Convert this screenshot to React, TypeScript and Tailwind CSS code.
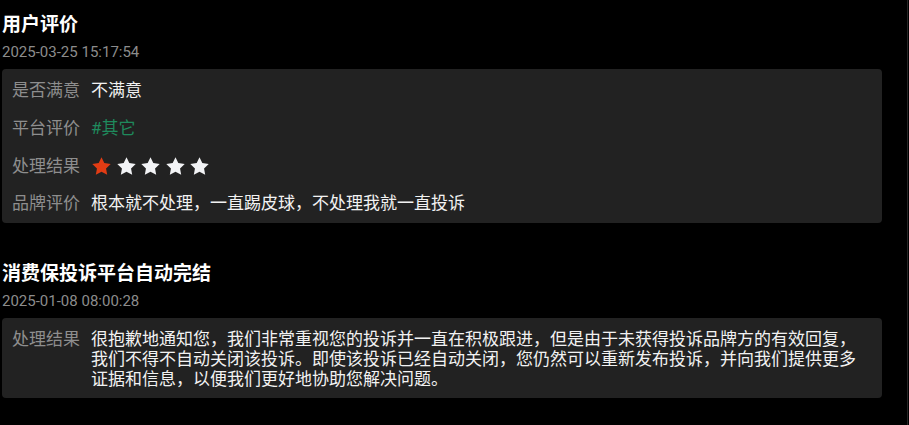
import React from 'react';

const FONT = 'Roboto, "Noto Sans CJK SC", sans-serif';

function Star({ color }: { color: string }) {
  return (
    <svg viewBox="0 0 24 24" className="h-[21px] w-[21px] shrink-0">
      <polygon
        points="12,1.5 15.2,8.1 22.5,9.1 17.2,14.2 18.5,21.5 12,18 5.5,21.5 6.8,14.2 1.5,9.1 8.8,8.1"
        fill={color}
      />
    </svg>
  );
}

function Row({ label, children }: { label: string; children: React.ReactNode }) {
  return (
    <div className="flex items-center gap-[11px] h-6">
      <span className="w-[68px] shrink-0 text-[#8e8e8e]">{label}</span>
      <div className="flex items-center">{children}</div>
    </div>
  );
}

export default function App() {
  const closeText = [
    '很抱歉地通知您，我们非常重视您的投诉并一直在积极跟进，但是由于未获得投诉品牌方的有效回复，',
    '我们不得不自动关闭该投诉。即使该投诉已经自动关闭，您仍然可以重新发布投诉，并向我们提供更多',
    '证据和信息，以便我们更好地协助您解决问题。',
  ];

  return (
    <div className="flex min-h-[425px] w-[909px] bg-black" style={{ fontFamily: FONT }}>
      <div className="flex-1 px-[2px] pt-[12px]">
        {/* 用户评价 */}
        <div className="text-[19px] leading-[26px] font-bold text-white">用户评价</div>
        <div className="mt-[3px] text-[15px] leading-[22px] text-[#8c8c8c]">2025-03-25 15:17:54</div>
        <div className="mt-[6px] w-[880px] rounded-[4px] bg-[#222222] pl-[10px] pt-[10px] pb-[7px] text-[17px] flex flex-col gap-[13.67px]">
          <Row label="是否满意">
            <span className="text-[#f2f2f2]">不满意</span>
          </Row>
          <Row label="平台评价">
            <span className="text-[#1f8a5d]">#其它</span>
          </Row>
          <Row label="处理结果">
            <div className="flex items-center gap-[3.6px]">
              <Star color="#e23c14" />
              <Star color="#f2f3f5" />
              <Star color="#f2f3f5" />
              <Star color="#f2f3f5" />
              <Star color="#f2f3f5" />
            </div>
          </Row>
          <Row label="品牌评价">
            <span className="text-[#f2f2f2]">根本就不处理，一直踢皮球，不处理我就一直投诉</span>
          </Row>
        </div>

        {/* 自动完结 */}
        <div className="mt-[38px] text-[19px] leading-[26px] font-bold text-white">消费保投诉平台自动完结</div>
        <div className="mt-[3px] text-[15px] leading-[22px] text-[#8c8c8c]">2025-01-08 08:00:28</div>
        <div className="mt-[6px] w-[880px] rounded-[4px] bg-[#222222] pl-[10px] pt-[11px] pb-[9px] text-[17px] leading-[20px] flex gap-[11px]">
          <span className="w-[68px] shrink-0 text-[#8e8e8e]">处理结果</span>
          <div className="text-[#f2f2f2] whitespace-nowrap">
            {closeText.map((line) => (
              <span key={line} className="block">
                {line}
              </span>
            ))}
          </div>
        </div>
      </div>
      <div className="w-px self-stretch bg-[#262626]" />
      <div className="w-px" />
    </div>
  );
}
